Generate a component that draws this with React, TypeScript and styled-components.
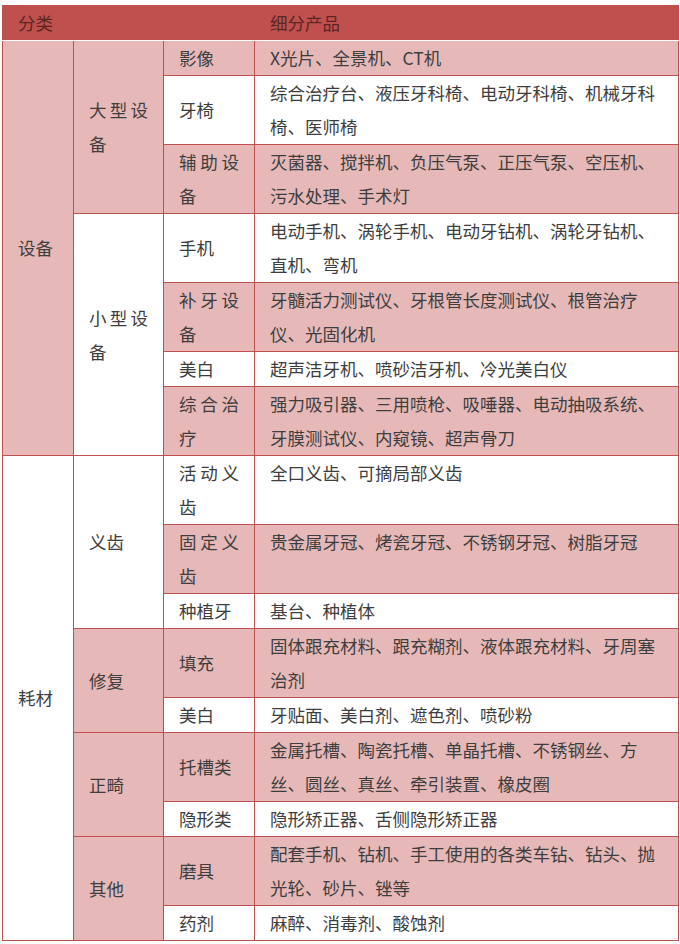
import React from 'react';
import styled, { createGlobalStyle } from 'styled-components';

const GlobalStyle = createGlobalStyle`
  html, body { margin: 0; padding: 0; background: #ffffff; }
  body { font-family: "Noto Sans CJK SC", "Noto Sans", sans-serif; }
`;

const Page = styled.div`
  padding: 5px 2px 0 2px;
`;

const Table = styled.table`
  width: 676px;
  border-collapse: collapse;
  table-layout: fixed;
  font-size: 17.5px;
  line-height: 34px;
  color: #3e3e3e;
`;

const HeadCell = styled.th`
  background: #c0504d;
  color: #5a2624;
  font-weight: normal;
  text-align: left;
  padding: 0 15px;
  border: 1px solid #c0504d;
  border-bottom: 1px solid #ffffff;
`;

const Cell = styled.td<{ $pink: boolean; $justify?: boolean; $top?: boolean }>`
  background: ${(p) => (p.$pink ? '#e6b9b8' : '#ffffff')};
  border: 1px solid #c0504d;
  padding: 0 15px;
  vertical-align: ${(p) => (p.$top ? 'top' : 'middle')};
  text-align: ${(p) => (p.$justify ? 'justify' : 'left')};
  word-break: break-all;
`;

type Item = { name: string; desc: string };
type Sub = { name: string; items: Item[] };
type Group = { cat: string; subs: Sub[] };

const data: Group[] = [
  {
    cat: '设备',
    subs: [
      {
        name: '大型设备',
        items: [
          { name: '影像', desc: 'X光片、全景机、CT机' },
          { name: '牙椅', desc: '综合治疗台、液压牙科椅、电动牙科椅、机械牙科椅、医师椅' },
          { name: '辅助设备', desc: '灭菌器、搅拌机、负压气泵、正压气泵、空压机、污水处理、手术灯' },
        ],
      },
      {
        name: '小型设备',
        items: [
          { name: '手机', desc: '电动手机、涡轮手机、电动牙钻机、涡轮牙钻机、直机、弯机' },
          { name: '补牙设备', desc: '牙髓活力测试仪、牙根管长度测试仪、根管治疗仪、光固化机' },
          { name: '美白', desc: '超声洁牙机、喷砂洁牙机、冷光美白仪' },
          { name: '综合治疗', desc: '强力吸引器、三用喷枪、吸唾器、电动抽吸系统、牙膜测试仪、内窥镜、超声骨刀' },
        ],
      },
    ],
  },
  {
    cat: '耗材',
    subs: [
      {
        name: '义齿',
        items: [
          { name: '活动义齿', desc: '全口义齿、可摘局部义齿' },
          { name: '固定义齿', desc: '贵金属牙冠、烤瓷牙冠、不锈钢牙冠、树脂牙冠' },
          { name: '种植牙', desc: '基台、种植体' },
        ],
      },
      {
        name: '修复',
        items: [
          { name: '填充', desc: '固体跟充材料、跟充糊剂、液体跟充材料、牙周塞治剂' },
          { name: '美白', desc: '牙贴面、美白剂、遮色剂、喷砂粉' },
        ],
      },
      {
        name: '正畸',
        items: [
          { name: '托槽类', desc: '金属托槽、陶瓷托槽、单晶托槽、不锈钢丝、方丝、圆丝、真丝、牵引装置、橡皮圈' },
          { name: '隐形类', desc: '隐形矫正器、舌侧隐形矫正器' },
        ],
      },
      {
        name: '其他',
        items: [
          { name: '磨具', desc: '配套手机、钻机、手工使用的各类车钻、钻头、抛光轮、砂片、锉等' },
          { name: '药剂', desc: '麻醉、消毒剂、酸蚀剂' },
        ],
      },
    ],
  },
];

export default function App() {
  let rowIndex = 0;
  const rows: React.ReactNode[] = [];
  data.forEach((g) => {
    const groupSpan = g.subs.reduce((n, s) => n + s.items.length, 0);
    g.subs.forEach((s, si) => {
      s.items.forEach((it, ii) => {
        const pink = rowIndex % 2 === 0;
        rows.push(
          <tr key={rowIndex}>
            {si === 0 && ii === 0 && (
              <Cell $pink={pink} rowSpan={groupSpan}>
                {g.cat}
              </Cell>
            )}
            {ii === 0 && (
              <Cell $pink={pink} $justify rowSpan={s.items.length}>
                {s.name}
              </Cell>
            )}
            <Cell $pink={pink} $justify>
              {it.name}
            </Cell>
            <Cell $pink={pink} $top>
              {it.desc}
            </Cell>
          </tr>
        );
        rowIndex += 1;
      });
    });
  });

  return (
    <Page>
      <GlobalStyle />
      <Table>
        <colgroup>
          <col style={{ width: 71 }} />
          <col style={{ width: 90 }} />
          <col style={{ width: 91 }} />
          <col style={{ width: 424 }} />
        </colgroup>
        <thead>
          <tr>
            <HeadCell colSpan={3}>分类</HeadCell>
            <HeadCell>细分产品</HeadCell>
          </tr>
        </thead>
        <tbody>{rows}</tbody>
      </Table>
    </Page>
  );
}
